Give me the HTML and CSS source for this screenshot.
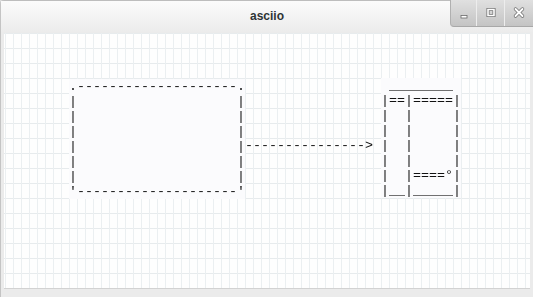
FILE: index.html
```
<!DOCTYPE html>
<html lang="en">
<head>
    <meta charset="UTF-8">
    <title>asciio</title>
    <link rel="stylesheet" href="styles.css">
</head>
<body>
    <div class="window">
        <div class="titlebar">
            <span class="title">asciio</span>
            <div class="buttons">
                <div class="btn">
                    <svg width="14" height="14" viewBox="0 0 14 14"><rect x="4" y="9.5" width="6" height="2.5" fill="#fff" stroke="#6a6a6a" stroke-width="0.8"/></svg>
                </div>
                <div class="btn">
                    <svg width="14" height="14" viewBox="0 0 14 14"><rect x="4" y="3.5" width="6" height="6" fill="none" stroke="#6a6a6a" stroke-width="3"/><rect x="4" y="3.5" width="6" height="6" fill="none" stroke="#fff" stroke-width="1.6"/></svg>
                </div>
                <div class="btn">
                    <svg width="14" height="14" viewBox="0 0 14 14"><path d="M3.5 3 L10.5 10 M10.5 3 L3.5 10" stroke="#6a6a6a" stroke-width="3.4" stroke-linecap="round"/><path d="M3.5 3 L10.5 10 M10.5 3 L3.5 10" stroke="#fff" stroke-width="2" stroke-linecap="round"/></svg>
                </div>
            </div>
        </div>
        <div class="canvas">
<pre class="element box-a">.--------------------.
|                    |
|                    |
|                    |
|                    |
|                    |
|                    |
'--------------------'</pre>
<pre class="element arrow">---------------></pre>
<pre class="element box-b"> ________ 
|==|=====|
|  |     |
|  |     |
|  |     |
|  |     |
|  |====°|
|__|_____|</pre>
        </div>
    </div>
</body>
</html>
```
FILE: styles.css
```
*{
    margin: 0;
    padding: 0;
    box-sizing: border-box;
}
body{
    width: 533px;
    height: 297px;
    overflow: hidden;
    background: #dcdcdc;
}
.window{
    width: 533px;
    height: 297px;
    display: flex;
    flex-direction: column;
    background: #ebebeb;
    border-left: 1px solid #c4c4c4;
    border-top: 1px solid #bdbdbd;
    border-radius: 4px 4px 0 0;
}
.titlebar{
    height: 31px;
    display: flex;
    justify-content: center;
    align-items: center;
    position: relative;
    background: linear-gradient(#fbfbfb, #ececec);
}
.title{
    font-family: "Liberation Sans", Arial, sans-serif;
    font-weight: bold;
    font-size: 12px;
    color: #2e3436;
    margin-top: -2px;
}
/* window controls sit over the title bar */
.buttons{
    position: absolute;
    top: -1px;
    right: 0;
    height: 27px;
    display: flex;
    background: linear-gradient(#e0e0e0, #c4c4c4);
    border-left: 1px solid #b0b0b0;
    border-bottom: 1px solid #a8a8a8;
    border-radius: 0 0 0 4px;
}
.btn{
    width: 28px;
    display: flex;
    justify-content: center;
    align-items: center;
    border-right: 1px solid #ededed;
}
.btn:first-child{
    width: 26px;
}
.btn:last-child{
    border-right: none;
}
.canvas{
    position: relative;
    margin: 1px 3px 0 3px;
    height: 256px;
    background-color: #fefefe;
    background-image:
        linear-gradient(to right, #ebeff1 1px, transparent 1px),
        linear-gradient(to bottom, #e7ebed 1px, transparent 1px);
    background-size: 8px 15px;
    background-position: 1px 0;
    border-bottom: 1px solid #d2d2d2;
}
/* diagram elements: placed on the character grid (8px x 15px cells) */
.element{
    position: absolute;
    font-family: "Liberation Mono", "Courier New", monospace;
    font-size: 13.333px;
    line-height: 15px;
    color: #111;
    background: #fbfbfd;
    white-space: pre;
    will-change: transform;
}
.box-a{
    left: 65px;
    top: 46px;
}
.arrow{
    left: 241px;
    top: 105px;
    background: transparent;
}
.box-b{
    left: 377px;
    top: 45px;
}
```
